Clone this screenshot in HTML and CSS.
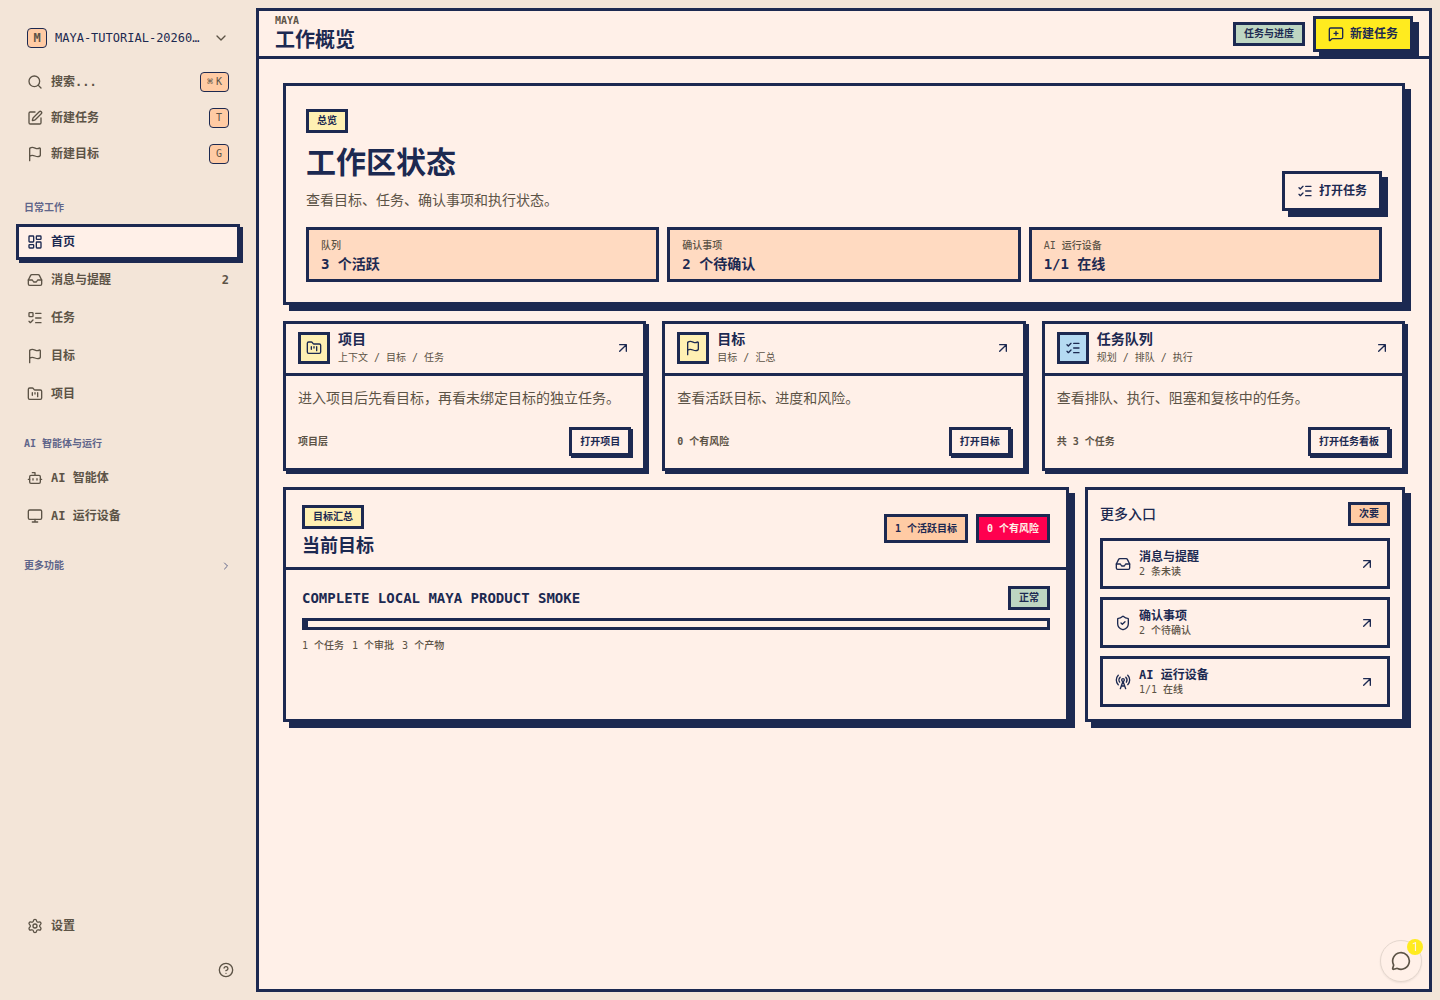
FILE: index.html
```html
<!doctype html>
<html lang="zh-CN">
<head>
    <meta charset="UTF-8">
    <meta name="viewport" content="width=device-width, initial-scale=1.0">
    <title>MAYA - 工作概览</title>
    <link rel="stylesheet" href="styles.css">
</head>
<body>
    <svg class="sprite" aria-hidden="true">
        <symbol id="i-search" viewBox="0 0 24 24"><circle cx="11" cy="11" r="8"/><path d="m21 21-4.34-4.34"/></symbol>
        <symbol id="i-pen" viewBox="0 0 24 24"><path d="M12 3H5a2 2 0 0 0-2 2v14a2 2 0 0 0 2 2h14a2 2 0 0 0 2-2v-7"/><path d="M18.375 2.625a1 1 0 0 1 3 3l-9.013 9.014a2 2 0 0 1-.853.505l-2.873.84a.5.5 0 0 1-.62-.62l.84-2.873a2 2 0 0 1 .506-.852z"/></symbol>
        <symbol id="i-flag" viewBox="0 0 24 24"><path d="M4 22V4a1 1 0 0 1 .4-.8A6 6 0 0 1 8 2c3 0 5 2 7.333 2q2 0 3.067-.8A1 1 0 0 1 20 4v10a1 1 0 0 1-.4.8A6 6 0 0 1 16 16c-3 0-5-2-8-2a6 6 0 0 0-4 1.528"/></symbol>
        <symbol id="i-dashboard" viewBox="0 0 24 24"><rect width="7" height="9" x="3" y="3" rx="1"/><rect width="7" height="5" x="14" y="3" rx="1"/><rect width="7" height="9" x="14" y="12" rx="1"/><rect width="7" height="5" x="3" y="16" rx="1"/></symbol>
        <symbol id="i-inbox" viewBox="0 0 24 24"><path d="M22 12h-6l-2 3h-4l-2-3H2"/><path d="M5.45 5.11 2 12v6a2 2 0 0 0 2 2h16a2 2 0 0 0 2-2v-6l-3.45-6.89A2 2 0 0 0 16.76 4H7.24a2 2 0 0 0-1.79 1.11z"/></symbol>
        <symbol id="i-todo" viewBox="0 0 24 24"><path d="M13 5h8M13 12h8M13 19h8M3 17l2 2 4-4"/><rect x="3" y="4" width="6" height="6" rx="1"/></symbol>
        <symbol id="i-checks" viewBox="0 0 24 24"><path d="M13 5h8M13 12h8M13 19h8M3 17l2 2 4-4M3 7l2 2 4-4"/></symbol>
        <symbol id="i-folder" viewBox="0 0 24 24"><path d="M4 20h16a2 2 0 0 0 2-2V8a2 2 0 0 0-2-2h-7.93a2 2 0 0 1-1.66-.9l-.82-1.2A2 2 0 0 0 7.93 3H4a2 2 0 0 0-2 2v13c0 1.1.9 2 2 2Z"/><path d="M8 10v4M12 10v2M16 10v6"/></symbol>
        <symbol id="i-bot" viewBox="0 0 24 24"><path d="M12 8V4H8"/><rect width="16" height="12" x="4" y="8" rx="2"/><path d="M2 14h2M20 14h2M15 13v2M9 13v2"/></symbol>
        <symbol id="i-monitor" viewBox="0 0 24 24"><rect width="20" height="14" x="2" y="3" rx="2"/><path d="M8 21h8M12 17v4"/></symbol>
        <symbol id="i-settings" viewBox="0 0 24 24"><path d="M9.671 4.136a2.34 2.34 0 0 1 4.659 0 2.34 2.34 0 0 0 3.319 1.915 2.34 2.34 0 0 1 2.33 4.033 2.34 2.34 0 0 0 0 3.831 2.34 2.34 0 0 1-2.33 4.033 2.34 2.34 0 0 0-3.319 1.915 2.34 2.34 0 0 1-4.659 0 2.34 2.34 0 0 0-3.32-1.915 2.34 2.34 0 0 1-2.33-4.033 2.34 2.34 0 0 0 0-3.831A2.34 2.34 0 0 1 6.35 6.051a2.34 2.34 0 0 0 3.319-1.915"/><circle cx="12" cy="12" r="3"/></symbol>
        <symbol id="i-help" viewBox="0 0 24 24"><circle cx="12" cy="12" r="10"/><path d="M9.09 9a3 3 0 0 1 5.83 1c0 2-3 3-3 3M12 17h.01"/></symbol>
        <symbol id="i-arrow" viewBox="0 0 24 24"><path d="M7 7h10v10M7 17 17 7"/></symbol>
        <symbol id="i-down" viewBox="0 0 24 24"><path d="m6 9 6 6 6-6"/></symbol>
        <symbol id="i-right" viewBox="0 0 24 24"><path d="m9 18 6-6-6-6"/></symbol>
        <symbol id="i-message-plus" viewBox="0 0 24 24"><path d="M22 17a2 2 0 0 1-2 2H6.828a2 2 0 0 0-1.414.586l-2.202 2.202A.71.71 0 0 1 2 21.286V5a2 2 0 0 1 2-2h16a2 2 0 0 1 2 2z"/><path d="M12 8v6M9 11h6"/></symbol>
        <symbol id="i-shield" viewBox="0 0 24 24"><path d="M20 13c0 5-3.5 7.5-7.66 8.95a1 1 0 0 1-.67-.01C7.5 20.5 4 18 4 13V6a1 1 0 0 1 1-1c2 0 4.5-1.2 6.24-2.72a1.17 1.17 0 0 1 1.52 0C14.51 3.81 17 5 19 5a1 1 0 0 1 1 1z"/><path d="m9 12 2 2 4-4"/></symbol>
        <symbol id="i-tower" viewBox="0 0 24 24"><path d="M4.9 16.1C1 12.2 1 5.8 4.9 1.9M7.8 4.7a6.14 6.14 0 0 0-.8 7.5"/><circle cx="12" cy="9" r="2"/><path d="M16.2 4.8c2 2 2.26 5.11.8 7.47M19.1 1.9a9.96 9.96 0 0 1 0 14.1M9.5 18h5M8 22l4-11 4 11"/></symbol>
        <symbol id="i-chat" viewBox="0 0 24 24"><path d="M2.992 16.342a2 2 0 0 1 .094 1.167l-1.065 3.29a1 1 0 0 0 1.236 1.168l3.413-.998a2 2 0 0 1 1.099.092 10 10 0 1 0-4.777-4.719"/></symbol>
    </svg>

    <div class="app">
        <aside class="sidebar">
            <button class="workspace" type="button">
                <span class="workspace__logo">M</span>
                <span class="workspace__name">MAYA-TUTORIAL-20260…</span>
                <svg class="icon"><use href="#i-down"/></svg>
            </button>
            <div class="quick">
                <button class="item" type="button"><svg class="icon"><use href="#i-search"/></svg><span>搜索...</span><kbd><i>⌘</i><i>K</i></kbd></button>
                <button class="item" type="button"><svg class="icon"><use href="#i-pen"/></svg><span>新建任务</span><kbd>T</kbd></button>
                <button class="item" type="button"><svg class="icon"><use href="#i-flag"/></svg><span>新建目标</span><kbd>G</kbd></button>
            </div>

            <h2 class="sidebar__label">日常工作</h2>
            <nav class="nav">
                <a class="item item--active" href="#"><svg class="icon"><use href="#i-dashboard"/></svg><span>首页</span></a>
                <a class="item" href="#"><svg class="icon"><use href="#i-inbox"/></svg><span>消息与提醒</span><b class="item__count">2</b></a>
                <a class="item" href="#"><svg class="icon"><use href="#i-todo"/></svg><span>任务</span></a>
                <a class="item" href="#"><svg class="icon"><use href="#i-flag"/></svg><span>目标</span></a>
                <a class="item" href="#"><svg class="icon"><use href="#i-folder"/></svg><span>项目</span></a>
            </nav>

            <h2 class="sidebar__label">AI 智能体与运行</h2>
            <nav class="nav">
                <a class="item" href="#"><svg class="icon"><use href="#i-bot"/></svg><span>AI 智能体</span></a>
                <a class="item" href="#"><svg class="icon"><use href="#i-monitor"/></svg><span>AI 运行设备</span></a>
            </nav>

            <button class="sidebar__label sidebar__more" type="button">更多功能<svg class="icon icon--small"><use href="#i-right"/></svg></button>

            <div class="sidebar__bottom">
                <a class="item" href="#"><svg class="icon"><use href="#i-settings"/></svg><span>设置</span></a>
                <button class="help" type="button" aria-label="帮助"><svg class="icon"><use href="#i-help"/></svg></button>
            </div>
        </aside>

        <main class="main">
            <header class="topbar">
                <div>
                    <p class="topbar__eyebrow">MAYA</p>
                    <h1 class="topbar__title">工作概览</h1>
                </div>
                <div class="topbar__actions">
                    <span class="tag tag--green">任务与进度</span>
                    <button class="button button--primary" type="button"><svg class="icon"><use href="#i-message-plus"/></svg>新建任务</button>
                </div>
            </header>

            <div class="content">
                <section class="panel hero">
                    <div class="hero__head">
                        <div>
                            <span class="tag tag--yellow">总览</span>
                            <h2 class="hero__title">工作区状态</h2>
                            <p class="hero__text">查看目标、任务、确认事项和执行状态。</p>
                        </div>
                        <button class="button" type="button"><svg class="icon"><use href="#i-checks"/></svg>打开任务</button>
                    </div>
                    <dl class="stats">
                        <div class="stat"><dt>队列</dt><dd>3 个活跃</dd></div>
                        <div class="stat"><dt>确认事项</dt><dd>2 个待确认</dd></div>
                        <div class="stat"><dt>AI 运行设备</dt><dd>1/1 在线</dd></div>
                    </dl>
                </section>

                <div class="cards">
                    <section class="card">
                        <header class="card__head">
                            <span class="card__icon"><svg class="icon"><use href="#i-folder"/></svg></span>
                            <div class="card__heading"><h3>项目</h3><p>上下文 / 目标 / 任务</p></div>
                            <svg class="icon"><use href="#i-arrow"/></svg>
                        </header>
                        <div class="card__body">
                            <p class="card__text">进入项目后先看目标，再看未绑定目标的独立任务。</p>
                            <div class="card__foot"><span>项目层</span><button class="button button--small" type="button">打开项目</button></div>
                        </div>
                    </section>
                    <section class="card">
                        <header class="card__head">
                            <span class="card__icon"><svg class="icon"><use href="#i-flag"/></svg></span>
                            <div class="card__heading"><h3>目标</h3><p>目标 / 汇总</p></div>
                            <svg class="icon"><use href="#i-arrow"/></svg>
                        </header>
                        <div class="card__body">
                            <p class="card__text">查看活跃目标、进度和风险。</p>
                            <div class="card__foot"><span>0 个有风险</span><button class="button button--small" type="button">打开目标</button></div>
                        </div>
                    </section>
                    <section class="card">
                        <header class="card__head">
                            <span class="card__icon card__icon--blue"><svg class="icon"><use href="#i-checks"/></svg></span>
                            <div class="card__heading"><h3>任务队列</h3><p>规划 / 排队 / 执行</p></div>
                            <svg class="icon"><use href="#i-arrow"/></svg>
                        </header>
                        <div class="card__body">
                            <p class="card__text">查看排队、执行、阻塞和复核中的任务。</p>
                            <div class="card__foot"><span>共 3 个任务</span><button class="button button--small" type="button">打开任务看板</button></div>
                        </div>
                    </section>
                </div>

                <div class="lower">
                    <section class="panel">
                        <header class="goals__head">
                            <div class="goals__heading">
                                <span class="tag tag--yellow">目标汇总</span>
                                <h2 class="goals__title">当前目标</h2>
                            </div>
                            <div class="goals__badges">
                                <span class="tag tag--tall tag--peach">1 个活跃目标</span>
                                <span class="tag tag--tall tag--red">0 个有风险</span>
                            </div>
                        </header>
                        <div class="goal">
                            <div class="goal__row">
                                <h3 class="goal__title">COMPLETE LOCAL MAYA PRODUCT SMOKE</h3>
                                <span class="tag tag--green">正常</span>
                            </div>
                            <div class="progress"><div class="progress__fill"></div></div>
                            <div class="goal__meta"><span>1 个任务</span><span>1 个审批</span><span>3 个产物</span></div>
                        </div>
                    </section>

                    <section class="panel more">
                        <header class="more__head">
                            <h2 class="more__title">更多入口</h2>
                            <span class="tag tag--peach">次要</span>
                        </header>
                        <a class="entry" href="#">
                            <svg class="icon"><use href="#i-inbox"/></svg>
                            <span class="entry__text"><strong>消息与提醒</strong><small>2 条未读</small></span>
                            <svg class="icon"><use href="#i-arrow"/></svg>
                        </a>
                        <a class="entry" href="#">
                            <svg class="icon"><use href="#i-shield"/></svg>
                            <span class="entry__text"><strong>确认事项</strong><small>2 个待确认</small></span>
                            <svg class="icon"><use href="#i-arrow"/></svg>
                        </a>
                        <a class="entry" href="#">
                            <svg class="icon"><use href="#i-tower"/></svg>
                            <span class="entry__text"><strong>AI 运行设备</strong><small>1/1 在线</small></span>
                            <svg class="icon"><use href="#i-arrow"/></svg>
                        </a>
                    </section>
                </div>
            </div>
        </main>
    </div>

    <button class="chat" type="button" aria-label="消息">
        <svg class="icon icon--large"><use href="#i-chat"/></svg>
        <span class="chat__count">1</span>
    </button>
</body>
</html>
```
FILE: styles.css
```css
:root {
    --navy: #1c2951;
    --sand: #f3e5d8;
    --cream: #fff0e8;
    --peach: #ffcba4;
    --peach-light: #ffdac1;
    --muted: #5c5346;
    --yellow: #ffeb1f;
}
*, ::before, ::after {
    padding: 0;
    margin: 0;
    box-sizing: border-box;
}
body {
    background: var(--sand);
    color: var(--navy);
    font-family: "DejaVu Sans Mono", "Noto Sans CJK SC", monospace;
    font-size: 14px;
    line-height: 20px;
}
button {
    font: inherit;
    color: inherit;
    background: none;
    border: none;
    cursor: pointer;
}
a {
    color: inherit;
    text-decoration: none;
}
.sprite {
    display: none;
}
.icon {
    width: 16px;
    height: 16px;
    flex: none;
    fill: none;
    stroke: currentColor;
    stroke-width: 2;
    stroke-linecap: round;
    stroke-linejoin: round;
}
.icon--small {
    width: 12px;
    height: 12px;
}
.icon--large {
    width: 20px;
    height: 20px;
}
.app {
    display: flex;
    min-height: 100vh;
}

/* sidebar */
.sidebar {
    width: 256px;
    padding: 20px 16px 16px;
    display: flex;
    flex-direction: column;
    flex: none;
    color: var(--muted);
}
.workspace {
    height: 36px;
    padding: 0 11px;
    display: flex;
    align-items: center;
    gap: 8px;
    text-align: left;
}
.workspace__logo {
    width: 20px;
    height: 20px;
    flex: none;
    border: 1px solid var(--navy);
    border-radius: 4px;
    background: var(--peach);
    font-size: 12px;
    line-height: 18px;
    font-weight: 600;
    text-align: center;
}
.workspace__name {
    flex: 1;
    white-space: nowrap;
    color: var(--navy);
    font-size: 12px;
}
.quick {
    margin: 8px 0 20px;
}
.item {
    width: 100%;
    height: 36px;
    padding: 0 8px;
    display: flex;
    align-items: center;
    gap: 8px;
    border: 3px solid transparent;
    font-size: 12px;
    font-weight: 600;
    text-align: left;
}
.item span {
    flex: 1;
}
.item--active {
    background: var(--cream);
    border-color: var(--navy);
    box-shadow: 3px 3px 0 var(--navy);
    color: var(--navy);
}
.item__count {
    font-weight: 600;
}
kbd {
    min-width: 20px;
    height: 20px;
    padding: 0 6px;
    display: flex;
    justify-content: center;
    gap: 3px;
    border: 1px solid var(--navy);
    border-radius: 4px;
    background: var(--peach);
    font-family: inherit;
    font-size: 10px;
    font-weight: 400;
    line-height: 18px;
}
kbd i {
    font-style: normal;
}
.sidebar__label {
    height: 32px;
    padding: 0 8px;
    color: #60658a;
    font-size: 10px;
    font-weight: 600;
    line-height: 32px;
}
.nav {
    display: flex;
    flex-direction: column;
    gap: 2px;
    margin-bottom: 16px;
}
.sidebar__more {
    display: flex;
    align-items: center;
    justify-content: space-between;
}
.sidebar__bottom {
    margin-top: auto;
    display: flex;
    flex-direction: column;
    align-items: flex-end;
    gap: 12px;
}
.help {
    width: 28px;
    height: 28px;
    display: grid;
    place-items: center;
}

/* main area */
.main {
    flex: 1;
    min-width: 0;
    margin: 8px 8px 8px 0;
    border: 3px solid var(--navy);
    background: var(--cream);
}
.topbar {
    height: 48px;
    padding: 0 16px;
    display: flex;
    align-items: center;
    justify-content: space-between;
    border-bottom: 3px solid var(--navy);
}
.topbar__eyebrow {
    color: var(--muted);
    font-size: 10px;
    line-height: 14px;
    font-weight: 600;
}
.topbar__title {
    font-size: 20px;
    line-height: 25px;
    font-weight: 600;
}
.topbar__actions {
    display: flex;
    align-items: center;
    gap: 8px;
}
.tag {
    display: inline-flex;
    align-items: center;
    height: 24px;
    padding: 0 8px;
    border: 3px solid var(--navy);
    font-size: 10px;
    font-weight: 600;
    line-height: 14px;
    white-space: nowrap;
}
.tag--tall {
    height: 29px;
}
.tag--green {
    background: #bed6c2;
}
.tag--yellow {
    background: #fff0b3;
}
.tag--peach {
    background: var(--peach);
}
.tag--red {
    background: #ff004f;
    color: var(--cream);
}
.button {
    height: 40px;
    padding: 0 12px;
    display: inline-flex;
    align-items: center;
    gap: 6px;
    border: 3px solid var(--navy);
    background: var(--cream);
    box-shadow: 6px 6px 0 var(--navy);
    font-size: 12px;
    font-weight: 600;
    white-space: nowrap;
}
.button--primary {
    height: 36px;
    background: var(--yellow);
}
.button--small {
    height: 29px;
    padding: 0 8px;
    box-shadow: 2px 2px 0 var(--navy);
    font-size: 10px;
}
.content {
    padding: 24px;
    display: flex;
    flex-direction: column;
    gap: 16px;
}
.panel {
    border: 3px solid var(--navy);
    box-shadow: 6px 6px 0 var(--navy);
    background: var(--cream);
}
.hero {
    padding: 23px 20px 20px;
}
.hero__head {
    display: flex;
    align-items: flex-end;
    justify-content: space-between;
}
.hero__head .tag, .goals__head .tag {
    display: flex;
    width: fit-content;
}
.hero__title {
    margin-top: 11px;
    font-size: 30px;
    line-height: 38px;
    font-weight: 600;
}
.hero__text {
    margin-top: 8px;
    color: var(--muted);
    line-height: 21px;
}
.stats {
    margin-top: 16px;
    display: grid;
    grid-template-columns: repeat(3, 1fr);
    gap: 8px;
}
.stat {
    padding: 8px 12px 4px;
    border: 3px solid var(--navy);
    background: var(--peach-light);
}
.stat dt {
    color: var(--muted);
    font-size: 10px;
    line-height: 15px;
    font-weight: 500;
}
.stat dd {
    line-height: 22px;
    font-weight: 600;
}
.cards {
    display: grid;
    grid-template-columns: repeat(3, 1fr);
    gap: 16px;
}
.card {
    border: 3px solid var(--navy);
    box-shadow: 3px 3px 0 var(--navy);
}
.card__head {
    height: 52px;
    padding: 0 12px 1px;
    display: flex;
    align-items: center;
    gap: 8px;
    border-bottom: 3px solid var(--navy);
}
.card__icon {
    width: 32px;
    height: 32px;
    display: grid;
    place-items: center;
    border: 3px solid var(--navy);
    background: #fff0b3;
}
.card__icon--blue {
    background: #b5daf2;
}
.card__heading {
    flex: 1;
    padding-bottom: 2px;
}
.card__heading h3 {
    margin-bottom: 2px;
    font-size: 14px;
    line-height: 20px;
    font-weight: 600;
}
.card__heading p {
    color: var(--muted);
    font-size: 10px;
    line-height: 14px;
}
.card__body {
    padding: 12px;
}
.card__text {
    color: var(--muted);
    line-height: 20px;
}
.card__foot {
    margin-top: 19px;
    display: flex;
    align-items: center;
    justify-content: space-between;
    color: var(--muted);
    font-size: 10px;
    font-weight: 600;
}
.card__foot .button {
    color: var(--navy);
}
.lower {
    display: grid;
    grid-template-columns: 1fr 320px;
    gap: 16px;
}
.goals__head {
    height: 80px;
    padding: 0 16px;
    display: flex;
    align-items: center;
    justify-content: space-between;
    border-bottom: 3px solid var(--navy);
}
.goals__heading {
    padding-top: 6px;
}
.goals__title {
    margin-top: 5px;
    font-size: 18px;
    line-height: 24px;
    font-weight: 600;
}
.goals__badges {
    display: flex;
    gap: 8px;
}
.goal {
    padding: 16px;
}
.goal__row {
    display: flex;
    align-items: center;
    justify-content: space-between;
}
.goal__title {
    font-size: 14px;
    font-weight: 600;
}
.progress {
    height: 12px;
    margin: 8px 0;
    border: 3px solid var(--navy);
}
.progress__fill {
    width: 3px;
    height: 100%;
    background: var(--navy);
}
.goal__meta {
    display: flex;
    gap: 8px;
    color: var(--muted);
    font-size: 10px;
    line-height: 16px;
    font-weight: 500;
}
.more {
    padding: 12px;
    display: flex;
    flex-direction: column;
    gap: 8px;
}
.more__head {
    margin-bottom: 4px;
    display: flex;
    align-items: center;
    justify-content: space-between;
}
.more__title {
    font-size: 14px;
    font-weight: 500;
}
.entry {
    height: 51px;
    padding: 0 12px;
    display: flex;
    align-items: center;
    gap: 8px;
    border: 3px solid var(--navy);
}
.entry__text {
    flex: 1;
    display: flex;
    flex-direction: column;
}
.entry__text strong {
    font-size: 12px;
    line-height: 16px;
    font-weight: 600;
}
.entry__text small {
    color: var(--muted);
    font-size: 10px;
    line-height: 14px;
    font-weight: 500;
}

/* floating chat button */
.chat {
    position: fixed;
    right: 18px;
    bottom: 18px;
    width: 42px;
    height: 42px;
    display: grid;
    place-items: center;
    border: 1px solid #e4d6cd;
    border-radius: 50%;
    background: var(--cream);
    box-shadow: 0 1px 2px rgba(0, 0, 0, .08);
    color: var(--muted);
}
.chat__count {
    position: absolute;
    top: -2px;
    right: -2px;
    width: 16px;
    height: 16px;
    border-radius: 50%;
    background: var(--yellow);
    color: var(--cream);
    font-family: Roboto, sans-serif;
    font-size: 12px;
    line-height: 16px;
}
```
